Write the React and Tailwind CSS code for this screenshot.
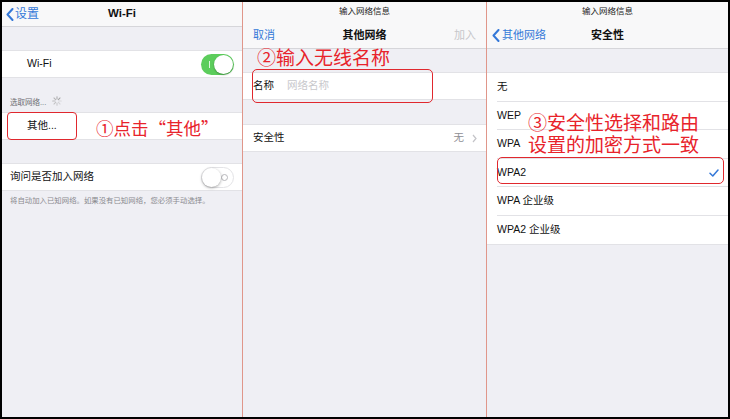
import React from "react";

const F = { fontFamily: '"Liberation Sans", "Noto Sans CJK SC", sans-serif' };
const AF = { fontFamily: '"Noto Sans CJK SC", "Liberation Serif", serif' };

function BackChevron() {
  return (
    <svg width="8" height="13" viewBox="0 0 8 13" className="shrink-0">
      <polyline points="6.5,1 1.5,6.5 6.5,12" fill="none" stroke="#3478d8" strokeWidth="2" strokeLinecap="round" strokeLinejoin="round" />
    </svg>
  );
}

function Spinner() {
  const lines = [];
  for (let i = 0; i < 8; i++) {
    const a = (i * Math.PI) / 4;
    lines.push(
      <line key={i} x1={5 + Math.cos(a) * 2} y1={5 + Math.sin(a) * 2} x2={5 + Math.cos(a) * 4.3} y2={5 + Math.sin(a) * 4.3} stroke="#9a9a9a" strokeOpacity={0.25 + i * 0.09} strokeWidth="1.1" strokeLinecap="round" />
    );
  }
  return <svg width="10" height="10" viewBox="0 0 10 10">{lines}</svg>;
}

function ToggleOn() {
  return (
    <div className="relative w-[33px] h-[21px] rounded-full bg-[#5ccd5c]">
      <div className="absolute left-[8px] top-[7px] w-px h-[7px] bg-white/80" />
      <div className="absolute right-[1px] top-[1px] w-[19px] h-[19px] rounded-full bg-white shadow-[0_1px_2px_rgba(0,0,0,0.3)]" />
    </div>
  );
}

function ToggleOff() {
  return (
    <div className="relative w-[33px] h-[21px] rounded-full bg-white border border-[#e3e3e6]">
      <div className="absolute right-[5px] top-[6px] w-[7px] h-[7px] rounded-full border border-[#b8b8bc]" />
      <div className="absolute left-0 top-0 w-[19px] h-[19px] rounded-full bg-white shadow-[0_1px_3px_rgba(0,0,0,0.35)]" />
    </div>
  );
}

function Panel1() {
  return (
    <div className="relative w-[240px] h-full bg-[#efeff4] flex flex-col" style={F}>
      <div className="relative h-[25px] bg-[#f8f8f9] border-b border-[#d6d6da] flex items-center">
        <div className="flex items-center gap-[1px] pl-[4px] text-[12px] text-[#3478d8]">
          <BackChevron />
          <span>设置</span>
        </div>
        <div className="absolute inset-0 flex items-center justify-center text-[11.5px] font-bold text-[#111]">Wi-Fi</div>
      </div>
      <div className="h-[23px]" />
      <div className="h-[28px] bg-white border-y border-[#e2e2e6] flex items-center justify-between pl-[25px] pr-[8px]">
        <span className="text-[10.5px] text-[#111]">Wi-Fi</span>
        <ToggleOn />
      </div>
      <div className="h-[34px] flex items-end pl-[8px] pb-[6px] gap-[6px]">
        <span className="text-[7.5px] text-[#6d6d72] leading-none">选取网络...</span>
        <Spinner />
      </div>
      <div className="relative h-[28px] bg-white border-y border-[#e2e2e6] flex items-center pl-[25px]">
        <span className="text-[10.5px] text-[#111]">其他...</span>
      </div>
      <div className="h-[23px]" />
      <div className="h-[28px] bg-white border-y border-[#e2e2e6] flex items-center justify-between pl-[8px] pr-[8px]">
        <span className="text-[10.5px] text-[#111]">询问是否加入网络</span>
        <ToggleOff />
      </div>
      <div className="pl-[8px] pt-[4px] text-[7.4px] text-[#8a8a8f] whitespace-nowrap">将自动加入已知网络。如果没有已知网络，您必须手动选择。</div>

      <div className="absolute left-[5px] top-[110px] w-[70px] h-[28px] rounded-[4px] border border-[#e0282e]" />
      <div className="absolute left-[94px] top-[114px] text-[17.5px] leading-[24px] text-[#e8232b] whitespace-nowrap" style={AF}>①点击“其他”</div>
    </div>
  );
}

function SheetHeader({ left, title, right }) {
  return (
    <div className="relative h-[47px] bg-[#f8f8f9] border-b border-[#d6d6da]">
      <div className="absolute top-[3px] left-0 right-0 text-center text-[8.5px] text-[#222]">输入网络信息</div>
      <div className="absolute top-[25px] left-0 right-0 h-[17px] flex items-center">
        {left}
      </div>
      <div className="absolute top-[25px] left-0 right-0 h-[17px] flex items-center justify-center text-[11px] font-bold text-[#111]">{title}</div>
      {right && <div className="absolute top-[25px] right-[10px] h-[17px] flex items-center">{right}</div>}
    </div>
  );
}

function Panel2() {
  return (
    <div className="relative w-[243px] h-full bg-[#efeff4] flex flex-col" style={F}>
      <SheetHeader
        left={<span className="pl-[10px] text-[11px] text-[#3478d8]">取消</span>}
        title="其他网络"
        right={<span className="text-[11px] text-[#c6c6ca]">加入</span>}
      />
      <div className="h-[23px]" />
      <div className="h-[28px] bg-white border-y border-[#e2e2e6] flex items-center pl-[10px]">
        <span className="text-[10.5px] text-[#111] w-[34px]">名称</span>
        <span className="text-[10.5px] text-[#c8c8cc]">网络名称</span>
      </div>
      <div className="h-[24px]" />
      <div className="h-[28px] bg-white border-y border-[#e2e2e6] flex items-center justify-between pl-[10px] pr-[9px]">
        <span className="text-[10.5px] text-[#111]">安全性</span>
        <div className="flex items-center gap-[8px]">
          <span className="text-[10.5px] text-[#8e8e93]">无</span>
          <svg width="5" height="9" viewBox="0 0 5 9"><polyline points="1,1 4,4.5 1,8" fill="none" stroke="#c4c4c8" strokeWidth="1.2" /></svg>
        </div>
      </div>

      <div className="absolute left-[14px] top-[43px] text-[19px] leading-[24px] text-[#e8232b] whitespace-nowrap" style={AF}>②输入无线名称</div>
      <div className="absolute left-[9px] top-[67px] w-[181px] h-[34px] rounded-[5px] border border-[#e0282e]" />
    </div>
  );
}

function Row3({ label, check, last }) {
  return (
    <div className="h-[28.5px] flex items-center justify-between pl-[10px] pr-[9px] relative">
      <span className="text-[10.5px] text-[#111]">{label}</span>
      {check && (
        <svg width="10" height="8" viewBox="0 0 10 8"><polyline points="1,4.2 3.8,7 9,1" fill="none" stroke="#3478d8" strokeWidth="1.5" strokeLinecap="round" strokeLinejoin="round" /></svg>
      )}
      {!last && <div className="absolute left-[10px] right-0 bottom-0 h-px bg-[#e2e2e6]" />}
    </div>
  );
}

function Panel3() {
  return (
    <div className="relative flex-1 h-full bg-[#efeff4] flex flex-col" style={F}>
      <SheetHeader
        left={
          <div className="flex items-center gap-[2px] pl-[5px] text-[11px] text-[#3478d8]">
            <BackChevron />
            <span>其他网络</span>
          </div>
        }
        title="安全性"
      />
      <div className="h-[23px]" />
      <div className="bg-white border-y border-[#e2e2e6]">
        <Row3 label="无" />
        <Row3 label="WEP" />
        <Row3 label="WPA" />
        <Row3 label="WPA2" check />
        <Row3 label="WPA 企业级" />
        <Row3 label="WPA2 企业级" last />
      </div>

      <div className="absolute left-[41px] top-[109px] text-[19px] leading-[22px] text-[#e8232b] whitespace-nowrap" style={AF}>
        <div>③安全性选择和路由</div>
        <div>设置的加密方式一致</div>
      </div>
      <div className="absolute left-[10px] top-[155px] w-[227px] h-[27px] rounded-[5px] border border-[#e0282e]" />
    </div>
  );
}

export default function App() {
  return (
    <div className="w-[730px] h-[419px] bg-black p-[2px] flex overflow-hidden">
      <Panel1 />
      <div className="w-px h-full bg-[#e0968a]" />
      <Panel2 />
      <div className="w-px h-full bg-[#e0968a]" />
      <Panel3 />
    </div>
  );
}
